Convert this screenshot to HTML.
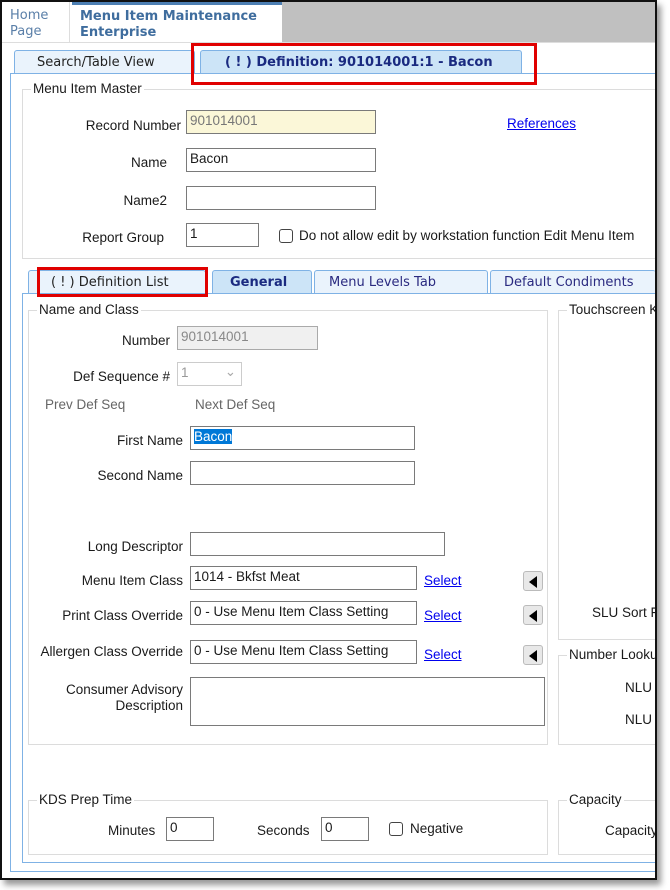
<!DOCTYPE html>
<html><head><style>
*{box-sizing:border-box}
body{margin:0;width:670px;height:890px;background:#fff;font-family:"Liberation Sans",sans-serif;font-size:13.5px;color:#1a1a1a;position:relative;overflow:hidden}
.a{position:absolute}
.frame{left:0;top:0;width:657px;height:880px;border:2px solid #111;box-shadow:4px 5px 6px #999;z-index:10}
.cover{left:657px;top:0;width:13px;height:890px;background:#fff;z-index:9}
.inp{position:absolute;border:1px solid #7a7a7a;background:#fff;height:24px;padding:2px 3px;font-size:13.5px;white-space:nowrap;overflow:hidden}
.lbl{position:absolute;text-align:right;white-space:nowrap}
.grp{position:absolute;border:1px solid #dcdcdc}
.grp>span{position:absolute;top:-9px;left:8px;background:#fff;padding:0 2px;line-height:16px;white-space:nowrap}
.tab{position:absolute;border:1px solid #7fb2e5;border-bottom:none;background:#eaf3fc;font-family:"DejaVu Sans",sans-serif;font-size:13px;color:#222;padding-top:4px;border-radius:3px 3px 0 0;white-space:nowrap;overflow:hidden}
.link{position:absolute;color:#0000ee;text-decoration:underline}
.arr{position:absolute;width:20px;height:20px;border:1px solid #bbb;border-radius:3px;background:#e8e8e8}
.arr:after{content:"";position:absolute;left:5px;top:4px;border-right:8px solid #000;border-top:6px solid transparent;border-bottom:6px solid transparent}
.red{position:absolute;border:3px solid #e00000;z-index:5}
</style></head><body>
<div class="a frame"></div>
<div class="a cover"></div>
<div class="a" style="left:2px;top:2px;width:68px;height:40px;background:#fff;border-right:1px solid #ddd;font-family:'DejaVu Sans',sans-serif;font-size:13px;color:#5a7fa8;padding:6px 0 0 8px;line-height:16px">Home<br>Page</div>
<div class="a" style="left:72px;top:2px;width:210px;height:40px;background:#fff;border-top:3px solid #4d7fb3;font-family:'DejaVu Sans',sans-serif;font-weight:bold;font-size:13px;color:#3f6d9e;padding:4px 0 0 8px;line-height:16px">Menu Item Maintenance<br>Enterprise</div>
<div class="a" style="left:282px;top:2px;width:373px;height:40px;background:#c0c0c0"></div>
<div class="a" style="left:2px;top:42px;width:653px;height:1px;background:#ddd"></div>
<div class="tab" style="left:14px;top:50px;width:181px;height:24px;padding-left:22px">Search/Table View</div>
<div class="tab" style="left:200px;top:50px;width:322px;height:24px;background:#cce4f7;padding-left:24px;font-weight:bold;color:#1a2a80">( ! ) Definition: 901014001:1 - Bacon</div>
<div class="red" style="left:191px;top:43px;width:346px;height:42px"></div>
<div class="a" style="left:10px;top:73px;width:646px;height:799px;border:1px solid #7fb2e5;border-right:none"></div>
<div class="grp" style="left:22px;top:89px;width:634px;height:170px;border-right:none"><span>Menu Item Master</span></div>
<div class="lbl" style="left:40px;top:118px;width:141px">Record Number</div>
<div class="inp" style="left:186px;top:110px;width:190px;background:#fbf7d8;color:#777">901014001</div>
<div class="link" style="left:507px;top:116px">References</div>
<div class="lbl" style="left:40px;top:155px;width:127px">Name</div>
<div class="inp" style="left:186px;top:148px;width:190px">Bacon</div>
<div class="lbl" style="left:40px;top:193px;width:127px">Name2</div>
<div class="inp" style="left:186px;top:186px;width:190px"></div>
<div class="lbl" style="left:40px;top:230px;width:124px">Report Group</div>
<div class="inp" style="left:186px;top:223px;width:73px">1</div>
<div class="a" style="left:279px;top:229px;width:14px;height:14px;border:1px solid #444;border-radius:3px"></div>
<div class="a" style="left:299px;top:228px;white-space:nowrap">Do not allow edit by workstation function Edit Menu Item</div>
<div class="tab" style="left:28px;top:270px;width:178px;height:24px;padding-left:22px">( ! ) Definition List</div>
<div class="tab" style="left:212px;top:270px;width:100px;height:24px;background:#cce4f7;padding-left:17px;font-weight:bold;color:#1a2a80">General</div>
<div class="tab" style="left:314px;top:270px;width:174px;height:24px;padding-left:14px;color:#2a2a80">Menu Levels Tab</div>
<div class="tab" style="left:490px;top:270px;width:166px;height:24px;padding-left:13px;color:#2a2a80;border-right:none">Default Condiments</div>
<div class="red" style="left:37px;top:267px;width:171px;height:30px"></div>
<div class="a" style="left:22px;top:293px;width:634px;height:570px;border:1px solid #7fb2e5;border-right:none"></div>
<div class="grp" style="left:28px;top:310px;width:520px;height:435px"><span>Name and Class</span></div>
<div class="grp" style="left:558px;top:310px;width:98px;height:330px;border-right:none"><span>Touchscreen K</span></div>
<div class="grp" style="left:558px;top:655px;width:98px;height:90px;border-right:none"><span>Number Lookup</span></div>
<div class="lbl" style="left:40px;top:333px;width:130px">Number</div>
<div class="inp" style="left:177px;top:326px;width:141px;background:#f0f0f0;color:#888;border-color:#aaa">901014001</div>
<div class="lbl" style="left:40px;top:369px;width:130px">Def Sequence #</div>
<div class="inp" style="left:177px;top:362px;width:65px;border-color:#ccc;color:#999">1<span style="position:absolute;right:5px;top:1px;color:#aaa">&#8964;</span></div>
<div class="a" style="left:45px;top:397px;color:#666">Prev Def Seq</div>
<div class="a" style="left:195px;top:397px;color:#666">Next Def Seq</div>
<div class="lbl" style="left:40px;top:433px;width:143px">First Name</div>
<div class="inp" style="left:190px;top:426px;width:225px"><span style="background:#0078d7;color:#fff">Bacon</span></div>
<div class="lbl" style="left:40px;top:468px;width:143px">Second Name</div>
<div class="inp" style="left:190px;top:461px;width:225px"></div>
<div class="lbl" style="left:40px;top:539px;width:143px">Long Descriptor</div>
<div class="inp" style="left:190px;top:532px;width:255px"></div>
<div class="lbl" style="left:40px;top:573px;width:143px">Menu Item Class</div>
<div class="inp" style="left:190px;top:566px;width:227px">1014 - Bkfst Meat</div>
<div class="link" style="left:424px;top:573px">Select</div>
<div class="arr" style="left:523px;top:571px"></div>
<div class="lbl" style="left:40px;top:608px;width:143px">Print Class Override</div>
<div class="inp" style="left:190px;top:601px;width:227px">0 - Use Menu Item Class Setting</div>
<div class="link" style="left:424px;top:608px">Select</div>
<div class="arr" style="left:523px;top:605px"></div>
<div class="lbl" style="left:20px;top:644px;width:163px">Allergen Class Override</div>
<div class="inp" style="left:190px;top:640px;width:227px">0 - Use Menu Item Class Setting</div>
<div class="link" style="left:424px;top:647px">Select</div>
<div class="arr" style="left:523px;top:645px"></div>
<div class="lbl" style="left:40px;top:682px;width:143px;line-height:16px">Consumer Advisory<br>Description</div>
<div class="inp" style="left:190px;top:677px;width:355px;height:49px"></div>
<div class="a" style="left:592px;top:605px;white-space:nowrap">SLU Sort F</div>
<div class="a" style="left:625px;top:680px">NLU</div>
<div class="a" style="left:625px;top:712px">NLU</div>
<div class="grp" style="left:28px;top:800px;width:520px;height:55px"><span>KDS Prep Time</span></div>
<div class="grp" style="left:558px;top:800px;width:98px;height:55px;border-right:none"><span>Capacity</span></div>
<div class="a" style="left:108px;top:823px">Minutes</div>
<div class="inp" style="left:166px;top:817px;width:48px">0</div>
<div class="a" style="left:257px;top:823px">Seconds</div>
<div class="inp" style="left:321px;top:817px;width:48px">0</div>
<div class="a" style="left:389px;top:822px;width:14px;height:14px;border:1px solid #444;border-radius:3px"></div>
<div class="a" style="left:410px;top:821px">Negative</div>
<div class="a" style="left:605px;top:823px;white-space:nowrap">Capacity</div>
</body></html>
